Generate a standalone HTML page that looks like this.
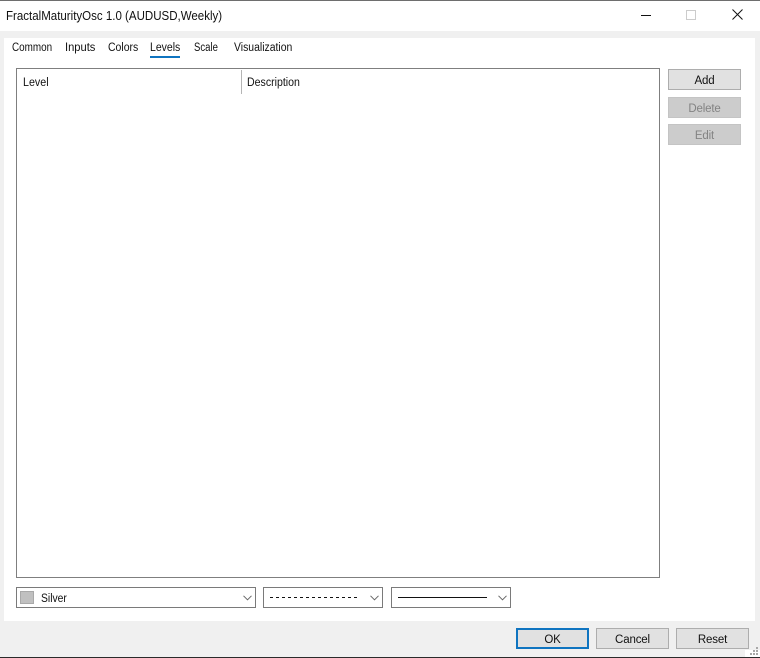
<!DOCTYPE html>
<html><head><meta charset="utf-8">
<style>
html,body{margin:0;padding:0;width:760px;height:658px;overflow:hidden;background:#f0f0f0}
body{position:relative;font-family:"Liberation Sans",sans-serif;font-size:11.5px;color:#111}
div,span{position:absolute;box-sizing:border-box}
span{white-space:nowrap;line-height:14px;transform-origin:0 50%}
.btn{background:#e1e1e1;border:1px solid #adadad;text-align:center;line-height:22px;letter-spacing:-.15px}
.dis{background:#cccccc;border:1px solid #c4c4c4;color:#838383}
.sel{background:#fff;border:1px solid #7a7a7a;height:21px;top:587px}
svg{position:absolute}
</style></head><body>
<div style="left:0;top:0;width:760px;height:1px;background:#6e6e6e"></div>
<div style="left:0;top:1px;width:760px;height:30px;background:#fff"></div>
<span style="left:6px;top:9px;font-size:13px;transform:scaleX(.886)">FractalMaturityOsc 1.0 (AUDUSD,Weekly)</span>
<div style="left:641px;top:15px;width:10px;height:1px;background:#111"></div>
<div style="left:686px;top:10px;width:10px;height:10px;border:1px solid #ccc"></div>
<svg style="left:732px;top:9px" width="11" height="11"><path d="M.5.5l10 10M10.500.5l-10 10" stroke="#111" fill="none"/></svg>

<div style="left:4px;top:38px;width:751px;height:583px;background:#fff"></div>
<span style="left:12px;top:41px;transform:scaleX(.86)">Common</span>
<span style="left:65px;top:41px;transform:scaleX(.97)">Inputs</span>
<span style="left:108px;top:41px;transform:scaleX(.91)">Colors</span>
<span style="left:150px;top:41px;transform:scaleX(.91)">Levels</span>
<div style="left:150px;top:56px;width:30px;height:2px;background:#0f74c0"></div>
<span style="left:194px;top:41px;transform:scaleX(.83)">Scale</span>
<span style="left:234px;top:41px;transform:scaleX(.906)">Visualization</span>

<div style="left:16px;top:68px;width:644px;height:510px;border:1px solid #7f7f7f;background:#fff"></div>
<span style="left:23px;top:76px;transform:scaleX(.93)">Level</span>
<div style="left:241px;top:70px;width:1px;height:24px;background:#b5b5b5"></div>
<span style="left:247px;top:76px;transform:scaleX(.92)">Description</span>

<div class="btn" style="left:668px;top:69px;width:73px;height:21px">Add</div>
<div class="btn dis" style="left:668px;top:97px;width:73px;height:21px">Delete</div>
<div class="btn dis" style="left:668px;top:124px;width:73px;height:21px">Edit</div>

<div class="sel" style="left:16px;width:240px"></div>
<div style="left:20px;top:591px;width:14px;height:13px;background:#c0c0c0;border:1px solid #a9a9a9"></div>
<span style="left:41px;top:592px;transform:scaleX(.9)">Silver</span>
<svg style="left:243px;top:595px" width="9" height="6"><path d="M.5.8L4.500 4.800 8.500.8" stroke="#666" fill="none"/></svg>

<div class="sel" style="left:263px;width:120px"></div>
<div style="left:270px;top:597px;width:88px;height:1px;background:repeating-linear-gradient(90deg,#111 0 3px,transparent 3px 6px)"></div>
<svg style="left:370px;top:595px" width="9" height="6"><path d="M.5.8L4.500 4.800 8.500.8" stroke="#666" fill="none"/></svg>

<div class="sel" style="left:391px;width:120px"></div>
<div style="left:398px;top:597px;width:89px;height:1px;background:#111"></div>
<svg style="left:498px;top:595px" width="9" height="6"><path d="M.5.8L4.500 4.800 8.500.8" stroke="#666" fill="none"/></svg>

<div class="btn" style="left:516px;top:628px;width:73px;height:21px;border:2px solid #0f74c0;line-height:20px">OK</div>
<div class="btn" style="left:596px;top:628px;width:73px;height:21px">Cancel</div>
<div class="btn" style="left:676px;top:628px;width:73px;height:21px">Reset</div>

<div style="left:745px;top:650px;width:15px;height:7px;background:#fff"></div>
<svg style="left:750px;top:646px" width="10" height="11" fill="#a8a8a8"><rect x="6" y="1" width="2" height="2"/><rect x="3" y="4" width="2" height="2"/><rect x="6" y="4" width="2" height="2"/><rect y="7" width="2" height="2"/><rect x="3" y="7" width="2" height="2"/><rect x="6" y="7" width="2" height="2"/></svg>
<div style="left:0;top:657px;width:760px;height:1px;background:#2a2a2a"></div>
</body></html>
